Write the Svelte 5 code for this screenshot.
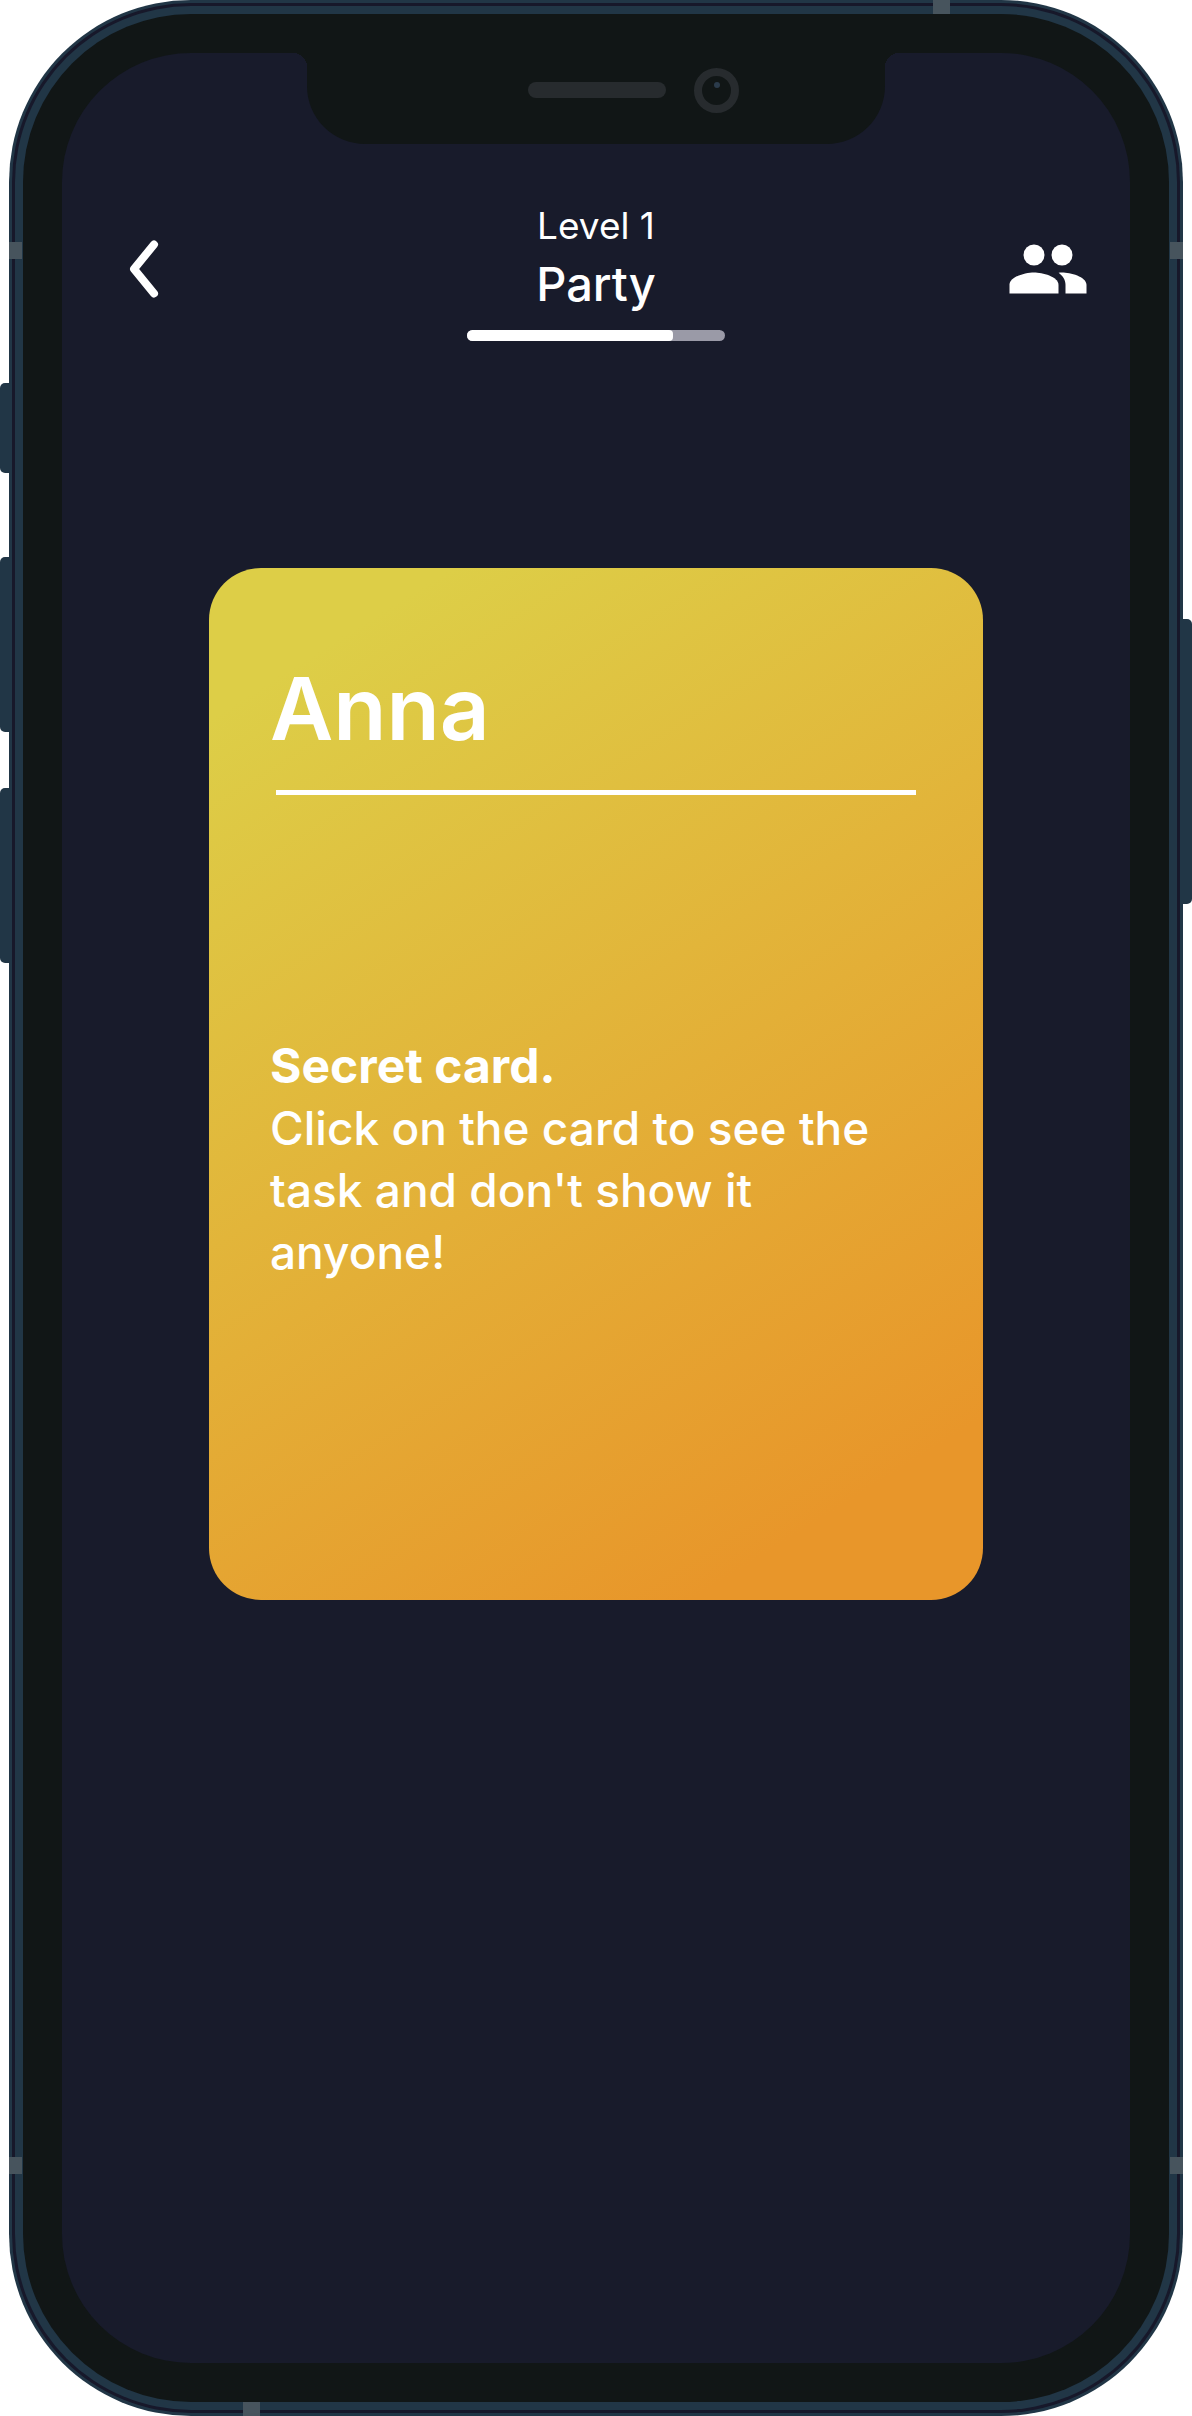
<script>
  const level = { number: 1, name: 'Party', progress: 80 };
  const card = {
    player: 'Anna',
    title: 'Secret card.',
    text: "Click on the card to see the task and don't show it anyone!"
  };
</script>

<main class="device">
  <div class="rail rail-left">
    <span class="key key-mute"></span>
    <span class="key key-volume"></span>
    <span class="key key-volume"></span>
  </div>

  <div class="shell">
    <div class="groove">
      <div class="band-frame">
        <div class="bezel">
          <div class="screen">
            <div class="notch">
              <span class="speaker"></span>
              <span class="camera"><span class="lens"></span></span>
            </div>

            <header class="header">
              <button class="icon-button" type="button" aria-label="Back">
                <svg class="chevron" viewBox="0 0 30 58" aria-hidden="true">
                  <path d="M25 4.5 5 29l20 24.5" />
                </svg>
              </button>
              <div class="level">
                <span class="level-number">Level {level.number}</span>
                <h1 class="level-name">{level.name}</h1>
                <progress class="progress" max="100" value={level.progress} aria-label="Level progress"></progress>
              </div>
              <button class="icon-button" type="button" aria-label="Players">
                <svg class="people" viewBox="0 0 24 24" aria-hidden="true">
                  <circle cx="8" cy="8" r="3" />
                  <circle cx="16" cy="8" r="3" />
                  <path d="M8 13c-2.33 0-7 1.17-7 3.5V19h14v-2.5c0-2.33-4.67-3.5-7-3.5z" />
                  <path d="M16 13c-.29 0-.62.02-.97.05 1.16.84 1.97 1.97 1.97 3.45V19h6v-2.5c0-2.33-4.67-3.5-7-3.5z" />
                </svg>
              </button>
            </header>

            <button class="card" type="button">
              <span class="player">{card.player}</span>
              <span class="rule"></span>
              <span class="task">
                <strong class="task-title">{card.title}</strong>
                <span>{card.text}</span>
              </span>
            </button>
          </div>
        </div>
      </div>
    </div>
    <span class="antenna side left upper"></span>
    <span class="antenna side right upper"></span>
    <span class="antenna side left lower"></span>
    <span class="antenna side right lower"></span>
    <span class="antenna end top"></span>
    <span class="antenna end bottom"></span>
  </div>

  <div class="rail rail-right">
    <span class="key key-power"></span>
  </div>
</main>

<style>
  :global(body) {
    background: #fff;
  }

  .device {
    --metal: #213646;
    --groove: #17182a;
    --glass: #111616;
    --screen: #181b2b;
    box-sizing: border-box;
    display: grid;
    grid-template-columns: 9px minmax(0, 1fr) 9px;
    min-height: 100vh;
    color: #fff;
    font-family: Inter, 'Liberation Sans', sans-serif;
  }

  .rail {
    display: flex;
    flex-direction: column;
  }

  .rail-left {
    padding-top: 383px;
  }

  .rail-right {
    padding-top: 619px;
  }

  .key {
    background: var(--metal);
  }

  .rail-left .key {
    border-radius: 5px 0 0 5px;
  }

  .rail-right .key {
    border-radius: 0 5px 5px 0;
  }

  .key-mute {
    height: 90px;
    margin-bottom: 84px;
  }

  .key-volume {
    height: 175px;
    margin-bottom: 56px;
  }

  .key-power {
    height: 285px;
  }

  .shell {
    position: relative;
    display: grid;
    padding: 3px;
    border-radius: 182px;
    background: var(--metal);
  }

  .groove {
    display: grid;
    padding: 3px;
    border-radius: 179px;
    background: var(--groove);
  }

  .band-frame {
    display: grid;
    padding: 8px;
    border-radius: 176px;
    background: var(--metal);
  }

  .bezel {
    display: grid;
    padding: 39px;
    border-radius: 168px;
    background: var(--glass);
  }

  .screen {
    display: flex;
    flex-direction: column;
    align-items: center;
    padding-bottom: 80px;
    border-radius: 129px;
    background: var(--screen);
  }

  .antenna {
    position: absolute;
    background: #47545d;
  }

  .side {
    width: 13px;
    height: 17px;
  }

  .end {
    width: 17px;
    height: 14px;
  }

  .left {
    left: 0;
  }

  .right {
    right: 0;
  }

  .upper {
    top: 242px;
  }

  .lower {
    bottom: 242px;
  }

  .top {
    top: 0;
    right: 233px;
  }

  .bottom {
    bottom: 0;
    left: 234px;
  }

  .notch {
    position: relative;
    box-sizing: border-box;
    display: flex;
    align-items: center;
    justify-content: flex-end;
    gap: 28px;
    width: 578px;
    height: 91px;
    padding: 0 146px 17px 0;
    border-radius: 0 0 58px 58px;
    background: var(--glass);
  }

  /* Concave shoulders where the notch meets the bezel */
  .notch::before,
  .notch::after {
    content: '';
    position: absolute;
    top: 0;
    width: 14px;
    height: 14px;
  }

  .notch::before {
    right: 100%;
    background: radial-gradient(circle at 0 100%, transparent 14px, var(--glass) 14px);
  }

  .notch::after {
    left: 100%;
    background: radial-gradient(circle at 100% 100%, transparent 14px, var(--glass) 14px);
  }

  .speaker {
    width: 138px;
    height: 16px;
    border-radius: 8px;
    background: #272b2e;
  }

  .camera {
    box-sizing: border-box;
    display: flex;
    justify-content: center;
    width: 45px;
    height: 45px;
    padding-top: 6px;
    border: 8px solid #272b2e;
    border-radius: 50%;
  }

  .lens {
    width: 6px;
    height: 6px;
    border-radius: 50%;
    background: #2b3b4b;
  }

  .header {
    box-sizing: border-box;
    display: grid;
    grid-template-columns: 84px 1fr 84px;
    align-items: start;
    width: 100%;
    margin-top: 58px;
    padding: 0 40px;
  }

  .icon-button {
    display: flex;
    align-items: center;
    justify-content: center;
    width: 84px;
    height: 84px;
    margin-top: 25px;
    padding: 0;
    border: 0;
    background: none;
    cursor: pointer;
  }

  .chevron {
    width: 30px;
    height: 58px;
    fill: none;
    stroke: #fff;
    stroke-width: 8;
    stroke-linecap: round;
    stroke-linejoin: round;
  }

  .people {
    width: 84px;
    height: 84px;
    fill: #fff;
  }

  .level {
    display: flex;
    flex-direction: column;
    align-items: center;
  }

  .level-number {
    font-size: 37px;
    line-height: 48px;
  }

  .level-name {
    margin: 0;
    font-size: 47px;
    font-weight: 500;
    line-height: 68px;
  }

  .progress {
    width: 258px;
    height: 11px;
    margin-top: 12px;
    border: 0;
    border-radius: 6px;
    background: #9a9aa7;
    overflow: hidden;
    appearance: none;
  }

  .progress::-webkit-progress-bar {
    background: #9a9aa7;
  }

  .progress::-webkit-progress-value {
    border-radius: 0 4px 4px 0;
    background: #fff;
  }

  .card {
    box-sizing: border-box;
    display: flex;
    flex-direction: column;
    width: calc(100% - 294px);
    aspect-ratio: 3 / 4;
    margin-top: 227px;
    padding: 86px 61px;
    border: 0;
    border-radius: 52px;
    background: linear-gradient(148deg, #ddce47 10%, #e8962a 88%);
    color: inherit;
    font-family: inherit;
    text-align: left;
    cursor: pointer;
  }

  .player {
    font-size: 87px;
    font-weight: 600;
    line-height: 110px;
  }

  .rule {
    height: 5px;
    margin: 26px 6px 0;
    background: #fff;
  }

  .task {
    display: flex;
    flex-direction: column;
    margin-top: 240px;
    font-size: 46px;
    font-weight: 500;
    line-height: 62px;
  }

  .task-title {
    font-size: 48px;
    font-weight: 700;
  }
</style>
